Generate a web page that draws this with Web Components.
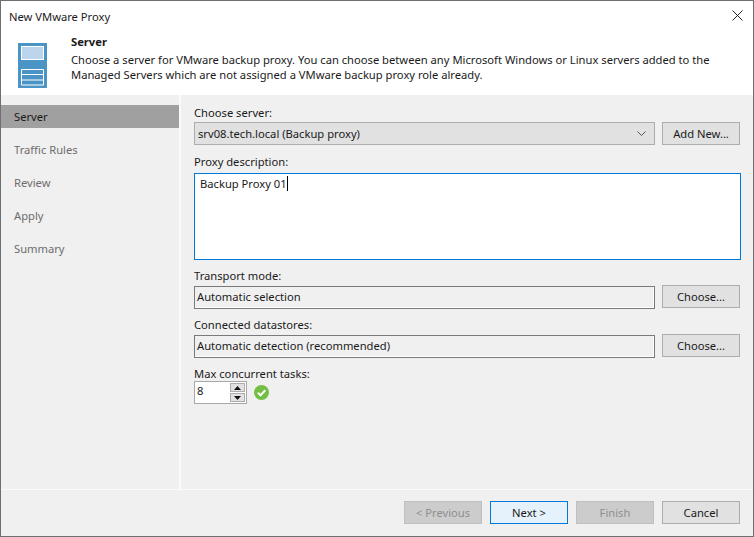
<!DOCTYPE html>
<html>
<head>
<meta charset="utf-8">
<style>
  html, body { margin: 0; height: 100%; background: #f0f0f0; }
  body { font-family: "Noto Sans", "Liberation Sans", sans-serif; font-size: 11.2px; }
</style>
</head>
<body>
<wizard-window>
  <wizard-header slot="header" title="Server">Choose a server for VMware backup proxy. You can choose between any Microsoft Windows or Linux servers added to the Managed Servers which are not assigned a VMware backup proxy role already.</wizard-header>
  <side-nav slot="nav"></side-nav>
  <server-form slot="main"></server-form>
  <wizard-footer slot="footer"></wizard-footer>
</wizard-window>

<script>
class WizardWindow extends HTMLElement {
  constructor() {
    super();
    this.attachShadow({ mode: 'open' });
    this.shadowRoot.innerHTML = `
      <style>
        :host {
          display: flex;
          flex-direction: column;
          box-sizing: border-box;
          width: 754px;
          height: 537px;
          border: 1px solid #6f6f6f;
          background: #f0f0f0;
        }
        .titlebar {
          display: flex;
          align-items: center;
          justify-content: space-between;
          height: 30px;
          background: #fff;
          padding: 0 10px 0 8px;
          color: #1a1a1a;
        }
        .titlebar svg { margin-bottom: 2px; }
        .body { display: flex; height: 394px; }
        svg { display: block; }
      </style>
      <div class="titlebar">
        <span>New VMware Proxy</span>
        <svg width="11" height="11" viewBox="0 0 11 11"><path d="M.5.5l10 10M10.5.5l-10 10" stroke="#222" fill="none"/></svg>
      </div>
      <slot name="header"></slot>
      <div class="body">
        <slot name="nav"></slot>
        <slot name="main"></slot>
      </div>
      <slot name="footer"></slot>
    `;
  }
}
customElements.define('wizard-window', WizardWindow);

class WizardHeader extends HTMLElement {
  constructor() {
    super();
    this.attachShadow({ mode: 'open' });
    this.shadowRoot.innerHTML = `
      <style>
        :host {
          display: flex;
          height: 64px;
          background: #fff;
          padding: 0 20px 0 17px;
          color: #1a1a1a;
        }
        svg { display: block; margin-top: 12px; flex: none; }
        .txt { margin-left: 24px; line-height: 15px; margin-top: 3px; }
        .title { font-weight: 700; margin-bottom: 2px; line-height: 16px; }
      </style>
      <svg width="29" height="45" viewBox="0 0 29 45">
        <rect width="29" height="45" fill="#4a94c6"/>
        <rect x="3.5" y="3.5" width="22" height="13" fill="#bcd4ec" stroke="#fff"/>
        <path d="M3.5 26.5h22v15.5h-22zM3.5 31.5h22M3.5 37h22" fill="none" stroke="#fff"/>
      </svg>
      <div class="txt">
        <div class="title"></div>
        <div><slot></slot></div>
      </div>
    `;
    this.shadowRoot.querySelector('.title').textContent = this.getAttribute('title');
  }
}
customElements.define('wizard-header', WizardHeader);

class SideNav extends HTMLElement {
  constructor() {
    super();
    this.attachShadow({ mode: 'open' });
    const items = ['Server', 'Traffic Rules', 'Review', 'Apply', 'Summary'];
    this.shadowRoot.innerHTML = `
      <style>
        :host {
          display: block;
          box-sizing: border-box;
          width: 180px;
          padding-top: 10px;
          border-right: 2px solid #fafafa;
        }
        .item { height: 23px; line-height: 24px; padding-left: 13px; margin-bottom: 10px; color: #6d6d6d; }
        .item.on { background: #a0a0a0; color: #1a1a1a; }
      </style>
      ${items.map((t, i) => `<div class="item ${i === 0 ? 'on' : ''}">${t}</div>`).join('')}
    `;
  }
}
customElements.define('side-nav', SideNav);

class VButton extends HTMLElement {
  constructor() {
    super();
    this.attachShadow({ mode: 'open' });
    this.shadowRoot.innerHTML = `
      <style>
        :host {
          display: flex;
          align-items: center;
          justify-content: center;
          box-sizing: border-box;
          flex: none;
          width: 78px;
          height: 23px;
          border: 1px solid #adadad;
          background: #e1e1e1;
          color: #1a1a1a;
        }
        :host([disabled]) { background: #cccccc; border-color: #bfbfbf; color: #8f8f8f; }
        :host([primary]) { background: #e5f1fb; border-color: #0078d7; }
      </style>
      <slot></slot>
    `;
  }
}
customElements.define('v-button', VButton);

class ServerForm extends HTMLElement {
  constructor() {
    super();
    this.attachShadow({ mode: 'open' });
    this.shadowRoot.innerHTML = `
      <style>
        :host {
          display: flex;
          flex-direction: column;
          width: 546px;
          padding: 10px 0 0 13px;
          color: #1a1a1a;
        }
        .label { line-height: 15px; height: 17px; }
        .label.snug { height: 15px; }
        .label.desc { height: 18px; margin-top: 9px; }
        .row { display: flex; gap: 7px; align-items: flex-start; }
        .select {
          flex: 1; height: 23px; box-sizing: border-box;
          display: flex; align-items: center; justify-content: space-between;
          padding: 0 8px 0 3px;
          background: #e1e1e1; border: 1px solid #adadad;
        }
        .area {
          box-sizing: border-box; width: 547px; height: 87px;
          margin: 1px 0 8px;
          border: 1px solid #0078d7; background: #fff;
          padding: 2px 5px; line-height: 15px;
        }
        .caret { display: inline-block; width: 1px; height: 15px; background: #000; vertical-align: -3px; }
        .field {
          flex: 1; height: 23px; box-sizing: border-box; margin-top: 1px;
          display: flex; align-items: center; padding: 0 0 2px 2px;
          background: #f0f0f0; border: 1px solid #7a7a7a;
          box-shadow: inset -1px -1px 0 #fff;
        }
        .next { margin-top: 8px; }
        .tasks { display: flex; align-items: center; gap: 7px; }
        .spin {
          box-sizing: border-box; width: 53px; height: 23px;
          display: flex; justify-content: space-between;
          border: 1px solid #a8a8a8; background: #fff; padding: 1px;
        }
        .spin span { padding-left: 1px; line-height: 16px; }
        .arrows { width: 15px; display: flex; flex-direction: column; gap: 1px; }
        .arrows i { flex: 1; display: flex; align-items: center; justify-content: center; background: #e1e1e1; border: 1px solid #adadad; }
        svg { display: block; }
      </style>
      <div class="label">Choose server:</div>
      <div class="row">
        <div class="select">
          <span>srv08.tech.local (Backup proxy)</span>
          <svg width="9" height="5" viewBox="0 0 9 5"><path d="M.5.5l4 4 4-4" fill="none" stroke="#555"/></svg>
        </div>
        <v-button>Add New...</v-button>
      </div>
      <div class="label desc">Proxy description:</div>
      <div class="area">Backup Proxy 01<span class="caret"></span></div>
      <div class="label">Transport mode:</div>
      <div class="row">
        <div class="field">Automatic selection</div>
        <v-button>Choose...</v-button>
      </div>
      <div class="label next">Connected datastores:</div>
      <div class="row">
        <div class="field">Automatic detection (recommended)</div>
        <v-button>Choose...</v-button>
      </div>
      <div class="label snug next">Max concurrent tasks:</div>
      <div class="tasks">
        <div class="spin">
          <span>8</span>
          <div class="arrows">
            <i><svg width="7" height="4" viewBox="0 0 7 4"><path d="M3.5 0L7 4H0z" fill="#111"/></svg></i>
            <i><svg width="7" height="4" viewBox="0 0 7 4"><path d="M0 0h7L3.5 4z" fill="#111"/></svg></i>
          </div>
        </div>
        <svg width="15" height="15" viewBox="0 0 15 15">
          <circle cx="7.5" cy="7.5" r="7.5" fill="#72bf44"/>
          <path d="M3.8 7.6l2.7 2.7 4.8-5" fill="none" stroke="#fff" stroke-width="2"/>
        </svg>
      </div>
    `;
  }
}
customElements.define('server-form', ServerForm);

class WizardFooter extends HTMLElement {
  constructor() {
    super();
    this.attachShadow({ mode: 'open' });
    this.shadowRoot.innerHTML = `
      <style>
        :host {
          display: flex;
          align-items: flex-start;
          justify-content: flex-end;
          gap: 8px;
          box-sizing: border-box;
          flex: 1;
          padding: 11px 13px 0 0;
          border-top: 1px solid #fafafa;
        }
      </style>
      <v-button disabled>&lt; Previous</v-button>
      <v-button primary>Next &gt;</v-button>
      <v-button disabled>Finish</v-button>
      <v-button>Cancel</v-button>
    `;
  }
}
customElements.define('wizard-footer', WizardFooter);
</script>
</body>
</html>
